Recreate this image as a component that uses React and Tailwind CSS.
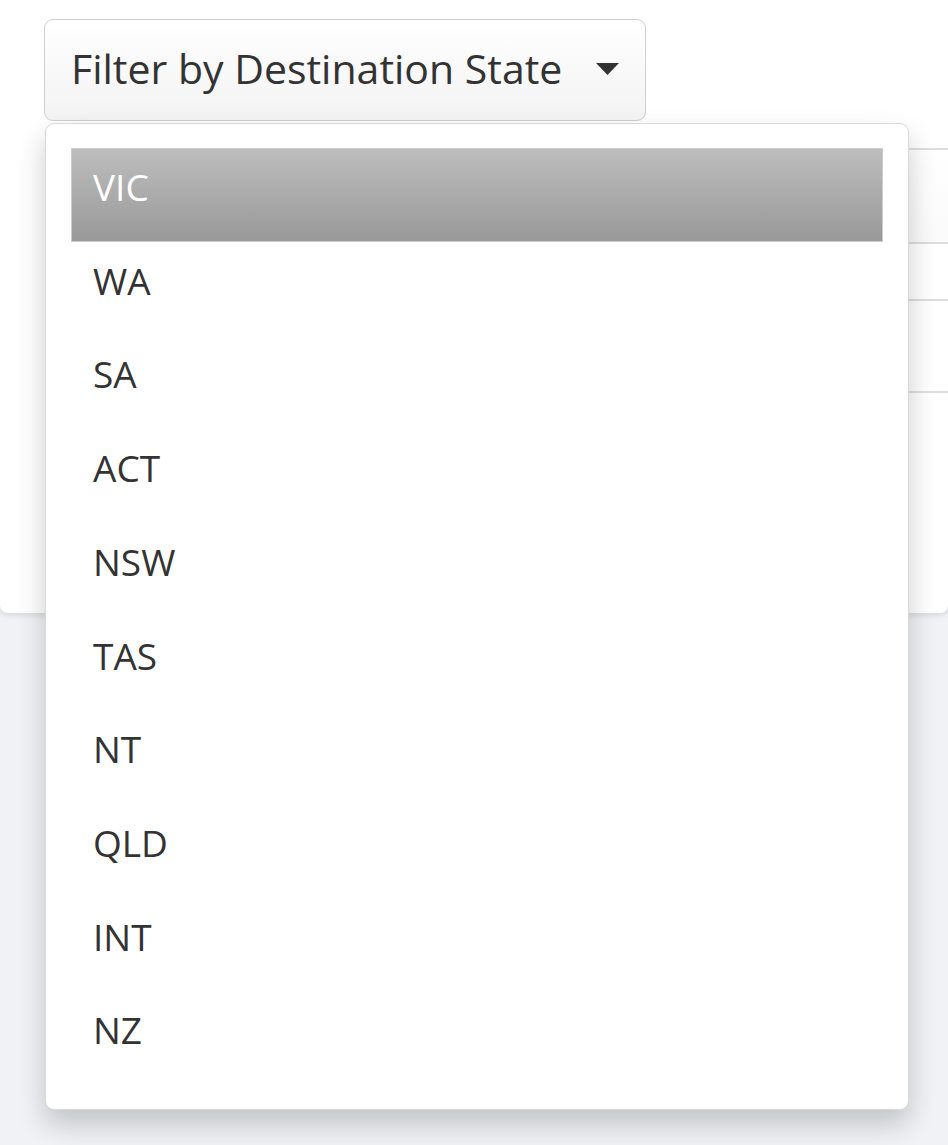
const STATES = ["VIC", "WA", "SA", "ACT", "NSW", "TAS", "NT", "QLD", "INT", "NZ"];

function Caret() {
  return (
    <svg width="23" height="12" viewBox="0 0 23 12" className="shrink-0">
      <path d="M0 0 L23 0 L11.5 12 Z" fill="#333" />
    </svg>
  );
}

export default function App() {
  return (
    <div
      className="min-h-screen bg-[#f0f2f5]"
      style={{ fontFamily: '"Open Sans", "Noto Sans", sans-serif' }}
    >
      <div className="relative h-[613px] bg-white rounded-b-[8px] shadow-[0_2px_6px_rgba(0,0,0,0.12)]">
        {/* filter button */}
        <div className="pt-[19px] pl-[44px]">
          <button className="flex items-center w-[602px] h-[102px] pl-[26px] pr-[26px] pb-[3px] border border-[#cfcfcf] rounded-[9px] bg-gradient-to-b from-white to-[#f3f3f3] text-[#333] text-[41px] leading-none">
            <span className="flex-1 text-left">Filter by Destination State</span>
            <Caret />
          </button>
        </div>

        {/* table behind the menu */}
        <div className="mt-[27px] ml-[50px]">
          <div className="h-[94px] border-t-2 border-[#dedede] bg-gradient-to-b from-white to-[#fafafa]" />
          <div className="h-[57px] border-t-2 border-[#dedede]" />
          <div className="h-[92px] border-t-2 border-[#dedede]" />
          <div className="border-t-2 border-[#dedede]" />
        </div>

        {/* open menu */}
        <div className="absolute left-[45px] top-[123px] w-[864px] z-10 rounded-[9px] border border-[#d9d9d9] bg-white pt-[24px] pb-[24px] pl-[25px] pr-[25px] shadow-[0_14px_28px_rgba(0,0,0,0.2)]">
          <ul>
            {STATES.map((s, i) => (
              <li
                key={s}
                className={
                  i === 0
                    ? "flex items-center h-[93.7px] pl-[21px] pb-[16px] border border-[#cdcdcd] bg-gradient-to-b from-[#bdbdbd] to-[#999999] text-white text-[37px]"
                    : "flex items-center h-[93.7px] pl-[22px] pb-[16px] text-[#333] text-[37px]"
                }
              >
                {s}
              </li>
            ))}
          </ul>
        </div>
      </div>
    </div>
  );
}
